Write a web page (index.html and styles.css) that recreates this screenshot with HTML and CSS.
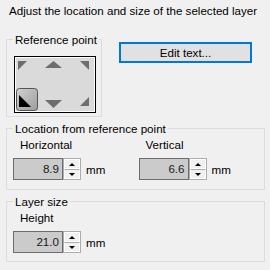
FILE: index.html
```html
<!DOCTYPE html>
<html>
  <head>
    <meta charset="utf8">
    <title>Layer position</title>
    <link rel="stylesheet" href="styles.css">
  </head>
  <body>

    <div class="title">Adjust the location and size of the selected layer</div>

    <div class="top-row">
      <fieldset class="group ref-group">
        <legend>Reference point</legend>
        <svg class="ref-pad" width="82" height="57" viewBox="0 0 82 57">
          <rect x="0.5" y="0.5" width="81" height="56" fill="#dadada" stroke="#000"/>
          <rect x="1.5" y="1.5" width="79" height="54" fill="none" stroke="#fff"/>
          <polygon points="4,5 13,5 4,14" fill="#6e6e6e"/>
          <polygon points="31,12 48,12 39.5,5" fill="#6e6e6e"/>
          <polygon points="66,5 75,5 75,14" fill="#6e6e6e"/>
          <defs>
            <linearGradient id="sel" x1="0" y1="0" x2="1" y2="1">
              <stop offset="0" stop-color="#d2d2d2"/>
              <stop offset="1" stop-color="#9c9c9c"/>
            </linearGradient>
          </defs>
          <rect x="2.5" y="32.5" width="21" height="22" rx="3" fill="url(#sel)" stroke="#555"/>
          <polygon points="5,39 5,51 17,51" fill="#000"/>
          <polygon points="31,44 48,44 39.5,52" fill="#6e6e6e"/>
          <polygon points="66,50 75,41 75,50" fill="#6e6e6e"/>
        </svg>
      </fieldset>
      <button class="edit-btn">Edit text...</button>
    </div>

    <fieldset class="group loc-group">
      <legend>Location from reference point</legend>
      <div class="fields">
        <div class="field">
          <div class="field-label">Horizontal</div>
          <div class="spin-row">
            <div class="spin-value">8.9</div>
            <div class="spin-btns"><span class="up"></span><span class="down"></span></div>
            <span class="unit">mm</span>
          </div>
        </div>
        <div class="field">
          <div class="field-label">Vertical</div>
          <div class="spin-row">
            <div class="spin-value">6.6</div>
            <div class="spin-btns"><span class="up"></span><span class="down"></span></div>
            <span class="unit">mm</span>
          </div>
        </div>
      </div>
    </fieldset>

    <fieldset class="group size-group">
      <legend>Layer size</legend>
      <div class="fields">
        <div class="field">
          <div class="field-label">Height</div>
          <div class="spin-row">
            <div class="spin-value">21.0</div>
            <div class="spin-btns"><span class="up"></span><span class="down"></span></div>
            <span class="unit">mm</span>
          </div>
        </div>
      </div>
    </fieldset>

  </body>
</html>
```

FILE: styles.css
```css
body {
  margin: 0;
  padding: 0 5px 0 6px;
  background: #f0f0f0;
  font-family: "Liberation Sans", Arial, sans-serif;
  font-size: 11.6px;
  line-height: 15px;
  color: #000;
  white-space: nowrap;
}

div.title {
  padding: 3px 0 0 3px;
}

div.top-row {
  display: flex;
  align-items: flex-start;
  margin-top: 14px;
}

fieldset.group {
  margin: 0;
  padding: 0;
  border: 1px solid #dcdcdc;
  min-width: 0;
}

fieldset.group legend {
  margin-left: 0;
  padding: 0 2px;
  line-height: 15px;
}

fieldset.ref-group {
  width: 96px;
  box-sizing: border-box;
  padding: 9px 0 3px 7px;
}

fieldset.ref-group legend {
  margin-left: -1px;
}

svg.ref-pad {
  display: block;
}

button.edit-btn {
  margin: 10px 0 0 17px;
  width: 133px;
  height: 21px;
  padding: 0;
  border: 2px solid #0078d7;
  background: #e1e1e1;
  font: inherit;
  color: #000;
}

fieldset.loc-group {
  margin-top: 4px;
  padding: 1px 0 9px 6px;
}

fieldset.size-group {
  margin-top: 4px;
  padding: 1px 0 8px 6px;
}

div.fields {
  display: flex;
}

div.field {
  width: 126px;
}

div.field-label {
  padding-left: 7px;
  margin-bottom: 6px;
}

div.spin-row {
  display: flex;
  align-items: center;
}

div.spin-value {
  width: 50px;
  height: 22px;
  box-sizing: border-box;
  border: 1px solid #6d6d6d;
  background: #cbcbcb;
  text-align: right;
  padding-right: 3px;
  line-height: 20px;
  color: #1a1a1a;
}

div.spin-btns {
  width: 18px;
  height: 22px;
  box-sizing: border-box;
  border: 1px solid #adadad;
  background: #f0f0f0;
  display: flex;
  flex-direction: column;
}

div.spin-btns span {
  flex: 1;
  display: flex;
  align-items: center;
  justify-content: center;
  border: 1px solid #fff;
}

div.spin-btns span.down {
  border-top-color: #adadad;
}

div.spin-btns span::after {
  content: "";
  border-left: 3px solid transparent;
  border-right: 3px solid transparent;
}

div.spin-btns span.up::after {
  border-bottom: 3px solid #000;
}

div.spin-btns span.down::after {
  border-top: 3px solid #000;
}

span.unit {
  margin-left: 5px;
}
```
